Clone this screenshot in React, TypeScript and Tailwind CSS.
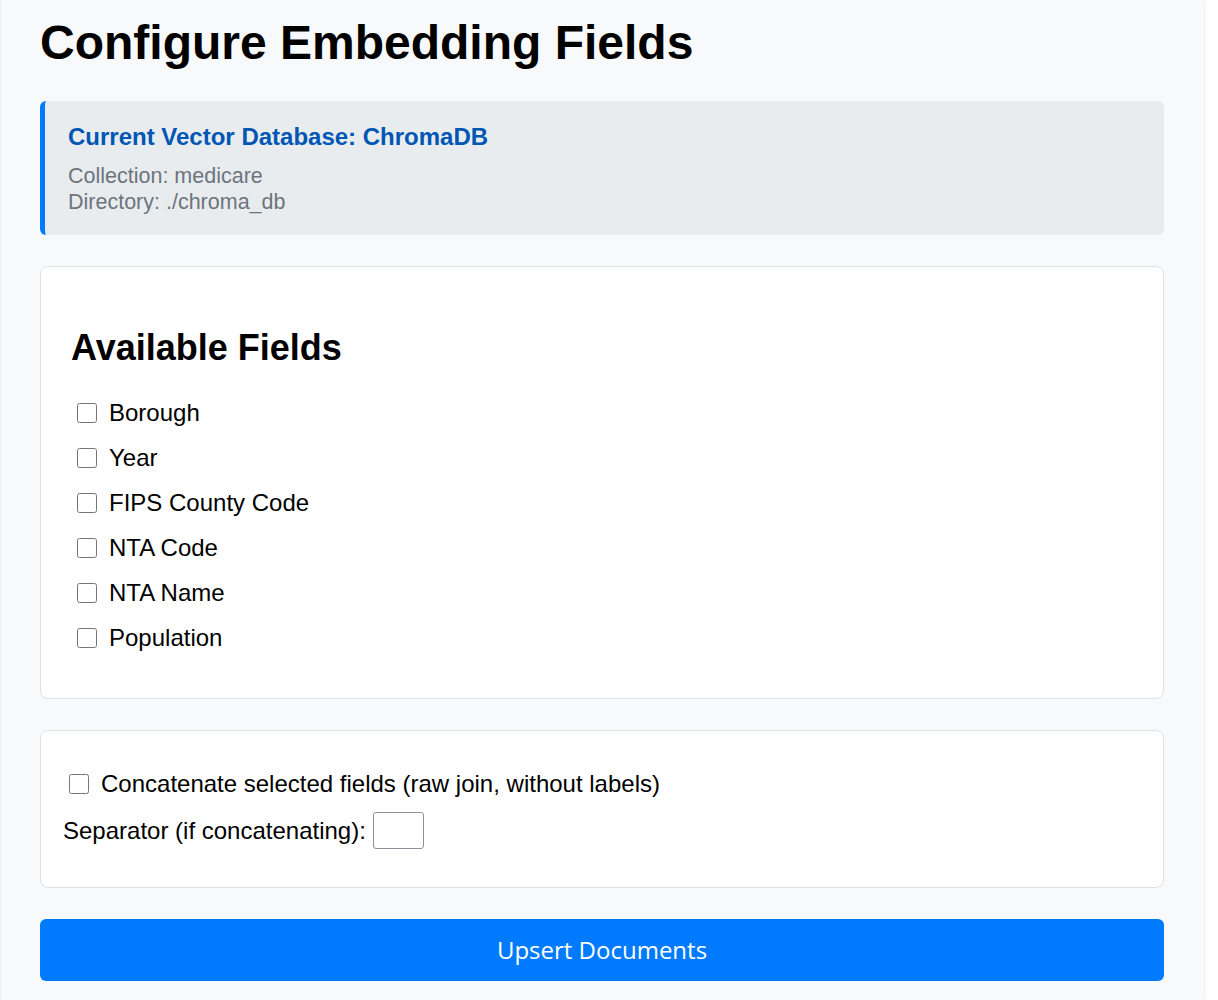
import { useState } from 'react';

interface Field {
    id: string;
    name: string;
}

const fields: Field[] = [
    { id: 'borough', name: 'Borough' },
    { id: 'year', name: 'Year' },
    { id: 'fips', name: 'FIPS County Code' },
    { id: 'nta_code', name: 'NTA Code' },
    { id: 'nta_name', name: 'NTA Name' },
    { id: 'population', name: 'Population' },
];

export default function App() {
    const [selected, setSelected] = useState<string[]>([]);
    const [concat, setConcat] = useState(false);
    const [separator, setSeparator] = useState('');

    const toggle = (id: string) => {
        setSelected((prev) => (prev.includes(id) ? prev.filter((f) => f !== id) : [...prev, id]));
    };

    return (
        <div className="min-h-screen bg-white font-['Liberation_Sans',Arial,sans-serif] text-black">
            <div className="w-[1203px] min-h-screen bg-[#f8f9fa] border-l border-[#eceef0] shadow-[2px_0_4px_rgba(0,0,0,0.06)] pl-[39px] pr-[39px] pt-[15px] pb-[20px]">
                <h1 className="text-[48px] leading-[56px] font-bold">Configure Embedding Fields</h1>

                <div className="mt-[30px] h-[134px] bg-[#e9ecef] border-l-[5px] border-[#007bff] rounded-[6px] pl-[23px] pt-[22px]">
                    <h3 className="text-[24px] leading-[28px] font-bold text-[#0056b3]">
                        Current Vector Database: ChromaDB
                    </h3>
                    <div className="mt-[13px] text-[21.5px] leading-[25.8px] text-[#6c757d]">
                        <p>Collection: medicare</p>
                        <p>Directory: ./chroma_db</p>
                    </div>
                </div>

                <div className="mt-[31px] bg-white border border-[#dee2e6] rounded-[8px] px-[30px] pt-[30px] pb-[31px]">
                    <h2 className="mt-[30px] mb-[29px] text-[36px] leading-[41px] font-bold">Available Fields</h2>
                    {fields.map((field) => (
                        <label key={field.id} className="flex items-center h-8 mb-[13px] text-[24px] cursor-pointer">
                            <input
                                type="checkbox"
                                checked={selected.includes(field.id)}
                                onChange={() => toggle(field.id)}
                                className="w-5 h-5 m-0 ml-[6px] mr-3"
                            />
                            <span>{field.name}</span>
                        </label>
                    ))}
                </div>

                <div className="mt-[31px] bg-white border border-[#dee2e6] rounded-[8px] pl-[22px] pt-[39px] pb-[38px]">
                    <label className="flex items-center h-[28px] text-[24px] cursor-pointer">
                        <input
                            type="checkbox"
                            checked={concat}
                            onChange={() => setConcat(!concat)}
                            className="w-5 h-5 m-0 ml-[6px] mr-3"
                        />
                        <span>Concatenate selected fields (raw join, without labels)</span>
                    </label>
                    <div className="mt-[14px] flex items-center h-[37px] text-[24px]">
                        <span>Separator (if concatenating):</span>
                        <input
                            type="text"
                            value={separator}
                            onChange={(e) => setSeparator(e.target.value)}
                            className="ml-[7px] w-[51px] h-[37px] px-1 bg-white border border-[#8f8f9d] rounded-[3px] outline-none"
                        />
                    </div>
                </div>

                <button className="mt-[31px] w-full h-[62px] bg-[#007bff] rounded-[6px] text-white text-[24px] font-['Open_Sans',sans-serif]">
                    Upsert Documents
                </button>
            </div>
        </div>
    );
}
